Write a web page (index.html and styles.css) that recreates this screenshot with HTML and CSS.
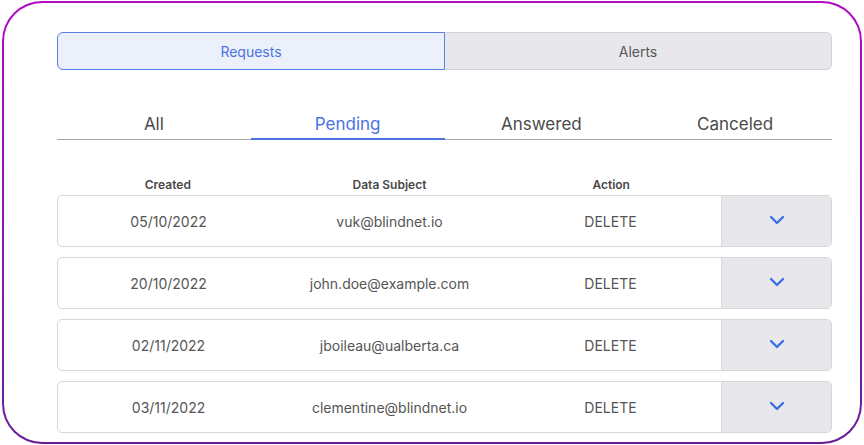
FILE: index.html
```html
<!DOCTYPE html>
<html>
<head>
<meta charset="utf-8">
<link rel="stylesheet" href="styles.css">
</head>
<body>
<div class="frame">
  <div class="inner">
    <div class="segmented">
      <div class="seg seg-active">Requests</div>
      <div class="seg seg-idle">Alerts</div>
    </div>
    <div class="tabs">
      <div class="tab">All</div>
      <div class="tab tab-active">Pending</div>
      <div class="tab">Answered</div>
      <div class="tab">Canceled</div>
    </div>
    <div class="head">
      <div>Created</div>
      <div>Data Subject</div>
      <div>Action</div>
      <div></div>
    </div>
    <div class="rows">
      <div class="row">
        <div class="cell">05/10/2022</div>
        <div class="cell">vuk@blindnet.io</div>
        <div class="cell">DELETE</div>
        <div class="toggle"><svg width="16" height="10" viewBox="0 0 16 10"><path d="M2 2 L8 8 L14 2" fill="none" stroke="#3d6ee8" stroke-width="2.4" stroke-linecap="round" stroke-linejoin="round"/></svg></div>
      </div>
      <div class="row">
        <div class="cell">20/10/2022</div>
        <div class="cell">john.doe@example.com</div>
        <div class="cell">DELETE</div>
        <div class="toggle"><svg width="16" height="10" viewBox="0 0 16 10"><path d="M2 2 L8 8 L14 2" fill="none" stroke="#3d6ee8" stroke-width="2.4" stroke-linecap="round" stroke-linejoin="round"/></svg></div>
      </div>
      <div class="row">
        <div class="cell">02/11/2022</div>
        <div class="cell">jboileau@ualberta.ca</div>
        <div class="cell">DELETE</div>
        <div class="toggle"><svg width="16" height="10" viewBox="0 0 16 10"><path d="M2 2 L8 8 L14 2" fill="none" stroke="#3d6ee8" stroke-width="2.4" stroke-linecap="round" stroke-linejoin="round"/></svg></div>
      </div>
      <div class="row">
        <div class="cell">03/11/2022</div>
        <div class="cell">clementine@blindnet.io</div>
        <div class="cell">DELETE</div>
        <div class="toggle"><svg width="16" height="10" viewBox="0 0 16 10"><path d="M2 2 L8 8 L14 2" fill="none" stroke="#3d6ee8" stroke-width="2.4" stroke-linecap="round" stroke-linejoin="round"/></svg></div>
      </div>
    </div>
  </div>
</div>
</body>
</html>
```

FILE: styles.css
```css
* { box-sizing: border-box; }
html, body { margin: 0; padding: 0; background: #ffffff; }
body {
  font-family: Inter, "Open Sans", "Liberation Sans", sans-serif;
  width: 864px;
  height: 445px;
  overflow: hidden;
}
.frame {
  width: 860px;
  height: 443px;
  margin: 1px 2px;
  padding: 2px;
  border-radius: 40px;
  background: linear-gradient(180deg, #b00cc2 0%, #8e18b4 50%, #6a1c98 100%);
}
.inner {
  height: 100%;
  background: #ffffff;
  border-radius: 38px;
  padding: 29px 28px 0 53px;
}
.segmented {
  display: flex;
  height: 38px;
  font-size: 14px;
}
.seg {
  flex: 1;
  display: flex;
  align-items: center;
  justify-content: center;
}
.seg-active {
  background: #ecf0fb;
  border: 1px solid #5a7fe6;
  border-radius: 6px 0 0 6px;
  color: #4b73e0;
}
.seg-idle {
  background: #e8e8ec;
  border: 1px solid #d3d3d8;
  border-left: none;
  border-radius: 0 6px 6px 0;
  color: #585858;
}
.tabs {
  margin-top: 38px;
  display: grid;
  grid-template-columns: repeat(4, 1fr);
  border-bottom: 1px solid #a6a6a6;
}
.tab {
  text-align: center;
  font-size: 17px;
  line-height: 20px;
  padding: 6px 0 5px;
  color: #4a4a4a;
}
.tab-active {
  color: #4b73e0;
  border-bottom: 2px solid #4b73e0;
  margin-bottom: -1px;
  padding-bottom: 4px;
}
.head {
  margin-top: 37px;
  display: grid;
  grid-template-columns: 1fr 1fr 1fr 110px;
  font-size: 12px;
  font-weight: 600;
  line-height: 16px;
  color: #484848;
  text-align: center;
}
.rows {
  margin-top: 2px;
  display: flex;
  flex-direction: column;
  gap: 10px;
}
.row {
  height: 52px;
  display: grid;
  grid-template-columns: 1fr 1fr 1fr 110px;
  border: 1px solid #d6d6d6;
  border-radius: 5px;
  overflow: hidden;
}
.cell {
  display: flex;
  align-items: center;
  justify-content: center;
  font-size: 14px;
  color: #555;
}
.toggle {
  display: flex;
  align-items: center;
  justify-content: center;
  background: #e8e8ec;
  border-left: 1px solid #dcdcdf;
  padding-bottom: 2px;
}
```
